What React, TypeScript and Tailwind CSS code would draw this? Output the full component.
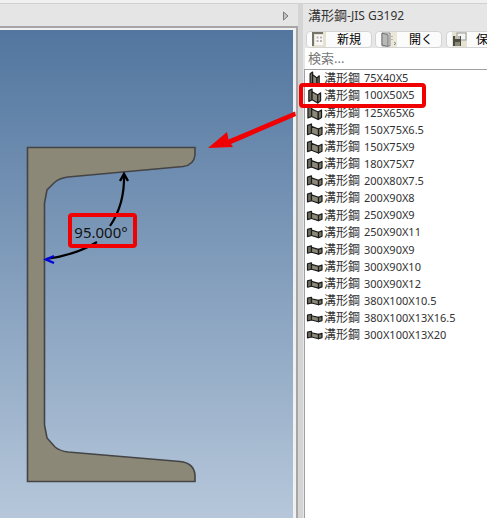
const rows = [
  { size: "75X40X5", w: 10, h: 15 },
  { size: "100X50X5", w: 13, h: 15 },
  { size: "125X65X6", w: 15, h: 14 },
  { size: "150X75X6.5", w: 16, h: 13 },
  { size: "150X75X9", w: 16, h: 13 },
  { size: "180X75X7", w: 16, h: 12 },
  { size: "200X80X7.5", w: 16, h: 11 },
  { size: "200X90X8", w: 16, h: 11 },
  { size: "250X90X9", w: 16, h: 10 },
  { size: "250X90X11", w: 16, h: 10 },
  { size: "300X90X9", w: 16, h: 9 },
  { size: "300X90X10", w: 16, h: 9 },
  { size: "300X90X12", w: 16, h: 9 },
  { size: "380X100X10.5", w: 16, h: 8 },
  { size: "380X100X13X16.5", w: 16, h: 8 },
  { size: "300X100X13X20", w: 16, h: 8 },
];

function ChannelIcon({ w, h }: { w: number; h: number }) {
  return (
    <svg width="18" height="16" viewBox="0 0 18 16" className="shrink-0">
      <g transform={`translate(${(16 - w) / 2 + 0.5} ${(16 - h) / 2}) scale(${w / 16} ${h / 14})`}>
        <path d="M1 2 L5 0.5 L5 10.5 L1 12 Z" fill="#6e6b5e" stroke="#1c1c1c" strokeWidth="1.2" vectorEffect="non-scaling-stroke" strokeLinejoin="round" />
        <path d="M5 3 L12 6 L12 13.5 L5 10.5 Z" fill="#8c8878" stroke="#1c1c1c" strokeWidth="1.2" vectorEffect="non-scaling-stroke" strokeLinejoin="round" />
        <path d="M12 6 L15.5 4 L15.5 11.5 L12 13.5 Z" fill="#7a7768" stroke="#1c1c1c" strokeWidth="1.2" vectorEffect="non-scaling-stroke" strokeLinejoin="round" />
      </g>
    </svg>
  );
}

function NewIcon() {
  return (
    <svg width="14" height="15" viewBox="0 0 14 15" className="shrink-0">
      <rect width="14" height="15" fill="#e6e2d2" />
      <path d="M1 14 V1 H11" fill="none" stroke="#77756c" strokeWidth="2" />
      <rect x="3" y="3" width="8" height="10" fill="#f8f8f8" />
      <path d="M4.5 4.5h2v2h-2z M8 4.5h2v2h-2z M4.5 8h2v2h-2z M8 8h2v2h-2z" fill="#b5b5b0" />
    </svg>
  );
}

function OpenIcon() {
  return (
    <svg width="16" height="15" viewBox="0 0 16 15" className="shrink-0">
      <rect x="8" width="8" height="15" fill="#ebe8da" />
      <path d="M1 1 L9 1 L9 14 L1 14 Z" fill="#d8d8d8" stroke="#8a8a8a" />
      <path d="M1 1 L7 3 L7 14.5 L1 13 Z" fill="#b8b8b8" stroke="#777" />
      <path d="M11 4v1 M11 7v1 M13 10l2 1.5l-2 1.5" stroke="#888" fill="none" />
    </svg>
  );
}

function SaveIcon() {
  return (
    <svg width="15" height="15" viewBox="0 0 15 15" className="shrink-0">
      <rect width="15" height="15" fill="#e6e2d2" />
      <rect x="5" y="1" width="9" height="7" fill="#f4f4f4" stroke="#999" />
      <path d="M1 4 H9 V14 H1 Z" fill="#4c4c40" />
      <rect x="3" y="4" width="5" height="3" fill="#bdbdb0" />
      <rect x="3" y="10" width="5" height="4" fill="#8c8878" />
    </svg>
  );
}

function Canvas() {
  return (
    <svg viewBox="0 0 293 488" className="block h-[488px] w-[293px] bg-gradient-to-b from-[#52769f] to-[#b6c7da]">
      <g transform="translate(0 -30)">
        <path
          d="M27.5 147.5 H195 V155 Q194 165 183 166.5 L68 177 Q60 178 55 182 L47 190 L44.5 203 V425 L47 438 L55 447 Q60 451 68 452 L180 461.5 Q194 463 195 475 V481.5 H27.5 Z"
          fill="#8c8878"
          stroke="#444"
          strokeWidth="1.6"
        />
        <path d="M124 174 Q125 204 110 226" fill="none" stroke="#000" strokeWidth="2.2" />
        <path d="M97 242 Q76 255 46 259" fill="none" stroke="#000" strokeWidth="2.2" />
        <path d="M120 181 L124 174 L128 181" fill="none" stroke="#000" strokeWidth="2.4" />
        <path d="M54 256 L46 259.5 L54 263" fill="none" stroke="#0000d8" strokeWidth="2.4" />
      </g>
    </svg>
  );
}

export default function App() {
  return (
    <div className="relative flex h-[518px] w-[487px] flex-col overflow-hidden bg-[#e6e6e6] font-['Noto_Sans','Noto_Sans_CJK_JP',sans-serif]">
      <div className="h-[4px] shrink-0 border-b border-[#d0d0d0] bg-[#f0f0f0]" />
      <div className="flex min-h-0 flex-1">
        <div className="flex w-[298px] shrink-0 flex-col bg-[#e5e5e5]">
          <div className="flex h-[22px] shrink-0 items-center justify-end pr-[9px] pt-[2px]">
            <svg width="6" height="10" viewBox="0 0 6 10">
              <path d="M0.5 1 L5 5 L0.5 9 Z" fill="#c4c4c4" stroke="#777" />
            </svg>
          </div>
          <div className="flex-1 border-t-2 border-r-2 border-[#a6a6a6] bg-[#f0f0f0] pt-[2px]">
            <Canvas />
          </div>
        </div>
        <div className="w-[5px] shrink-0 bg-[#d4d4d4]" />
        <div className="flex min-w-0 flex-1 flex-col overflow-hidden">
          <div className="flex h-[27px] shrink-0 items-center pb-[3px] pl-[5px] text-[12px] text-[#333]">
            <span className="text-[13px]">溝形鋼</span>-JIS G3192
          </div>
          <div className="flex w-[240px] shrink-0 gap-[3px] pl-[3px]">
            <div className="flex h-[17px] w-[66px] shrink-0 items-center rounded-[4px] border border-[#d4d4d4] bg-[#fbfbfb] pl-[5px] text-[12px] text-black">
              <NewIcon />
              <span className="ml-[11px]">新規</span>
            </div>
            <div className="flex h-[17px] w-[67px] shrink-0 items-center rounded-[4px] border border-[#d4d4d4] bg-[#fbfbfb] pl-[5px] text-[12px] text-black">
              <OpenIcon />
              <span className="ml-[12px]">開く</span>
            </div>
            <div className="ml-[1px] flex h-[17px] w-[66px] shrink-0 items-center rounded-[4px] border border-[#d4d4d4] bg-[#fbfbfb] pl-[5px] text-[12px] text-black">
              <SaveIcon />
              <span className="ml-[9px]">保</span>
            </div>
          </div>
          <div className="ml-[2px] flex h-[21px] shrink-0 items-center bg-white pl-[3px] text-[13px] text-[#777]">検索...</div>
          <div className="ml-[1px] flex-1 border-t border-l border-[#a0a0a0] bg-white pl-[1px]">
            {rows.map((r) => (
              <div key={r.size} className="flex h-[17.13px] items-center text-[#333]">
                <ChannelIcon w={r.w} h={r.h} />
                <span className="text-[12px]">溝形鋼</span>
                <span className="ml-[4px] text-[11px]">{r.size}</span>
              </div>
            ))}
          </div>
        </div>
      </div>

      {/* annotations laid over the screenshot */}
      <div className="absolute left-[299px] top-[83px] h-[25px] w-[127px] rounded-[4px] border-[4px] border-[#f00000]" />
      <div className="absolute left-[68px] top-[213px] flex h-[35px] w-[69px] items-center justify-center rounded-[4px] border-[4px] border-[#f00000] pt-[3px] pr-[3px] text-[15px] text-[#111]">95.000°</div>
      <svg width="110" height="60" viewBox="0 0 110 60" className="absolute left-[200px] top-[100px]">
        <path d="M95 11.5 L28.5 39.5 L27 32 L8 48 L33 47 L31 44 L96 16 Z" fill="#f00000" />
      </svg>
    </div>
  );
}
